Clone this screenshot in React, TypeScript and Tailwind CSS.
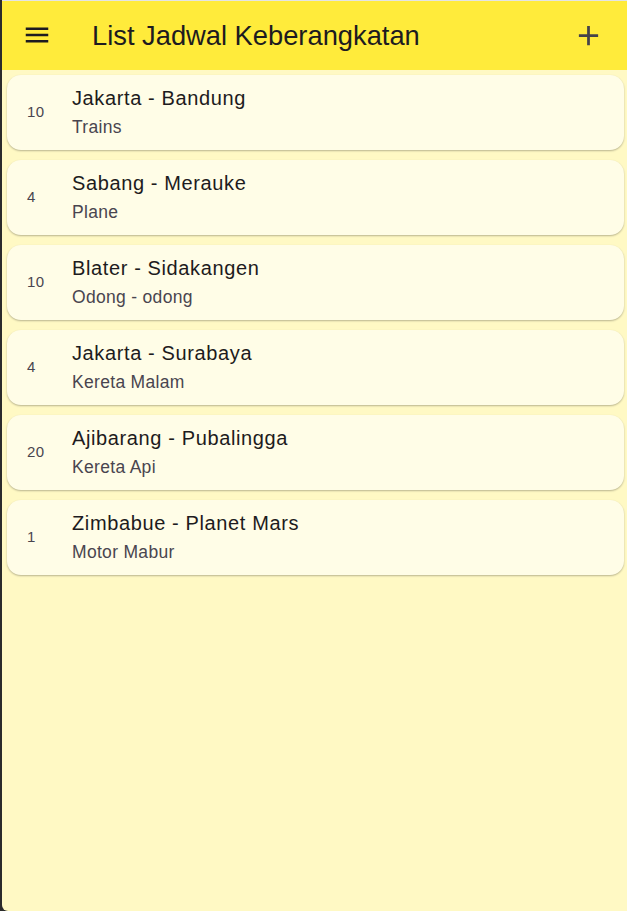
type Jadwal = {
  kursi: number
  rute: string
  kendaraan: string
}

const JADWAL: Jadwal[] = [
  { kursi: 10, rute: 'Jakarta - Bandung', kendaraan: 'Trains' },
  { kursi: 4, rute: 'Sabang - Merauke', kendaraan: 'Plane' },
  { kursi: 10, rute: 'Blater - Sidakangen', kendaraan: 'Odong - odong' },
  { kursi: 4, rute: 'Jakarta - Surabaya', kendaraan: 'Kereta Malam' },
  { kursi: 20, rute: 'Ajibarang - Pubalingga', kendaraan: 'Kereta Api' },
  { kursi: 1, rute: 'Zimbabue - Planet Mars', kendaraan: 'Motor Mabur' },
]

function MenuIcon() {
  return (
    <svg width="30" height="30" viewBox="0 0 24 24" fill="#1d1b20">
      <path d="M3 18h18v-2H3v2zm0-5h18v-2H3v2zm0-7v2h18V6H3z" />
    </svg>
  )
}

function AddIcon() {
  return (
    <svg width="33" height="33" viewBox="0 0 24 24" fill="#45434a">
      <path d="M19 13h-6v6h-2v-6H5v-2h6V5h2v6h6v2z" />
    </svg>
  )
}

export default function App() {
  return (
    <div className="h-[911px] w-[627px] flex bg-[#2b2b2b] font-['Liberation_Sans',Arial,sans-serif] overflow-hidden">
      {/* strip on the left edge */}
      <div className="w-[2px] flex-shrink-0" />

      <div className="flex-grow flex flex-col bg-[#fff9c4] rounded-bl-[6px]">
        {/* App bar */}
        <header className="h-[70px] flex-shrink-0 bg-[#ffeb3b] border-t border-[#e4e4e4] flex items-center">
          <div className="w-[70px] h-[70px] flex items-center justify-center -mt-[1px]">
            <MenuIcon />
          </div>
          <h1 className="ml-[20px] text-[27.3px] leading-none text-[#1d1b20]">
            List Jadwal Keberangkatan
          </h1>
          <div className="ml-auto mr-[22px] flex items-center -mt-[1px]">
            <AddIcon />
          </div>
        </header>

        {/* List */}
        <main className="flex flex-col pt-[5px] pl-[5px] pr-[3px] gap-[10px]">
          {JADWAL.map((item, i) => (
            <div
              key={i}
              className="h-[75px] rounded-[14px] bg-[#fffde7] shadow-[0_1px_2px_rgba(0,0,0,0.28)] flex items-center"
            >
              <div className="w-[65px] pl-[20px] text-[15px] tracking-[0.4px] text-[#49454f]">
                {item.kursi}
              </div>
              <div className="flex flex-col">
                <span className="text-[20px] leading-[28px] tracking-[0.62px] text-[#1d1b20]">
                  {item.rute}
                </span>
                <span className="text-[17.5px] leading-[30px] tracking-[0.31px] text-[#49454f]">
                  {item.kendaraan}
                </span>
              </div>
            </div>
          ))}
        </main>
      </div>
    </div>
  )
}
